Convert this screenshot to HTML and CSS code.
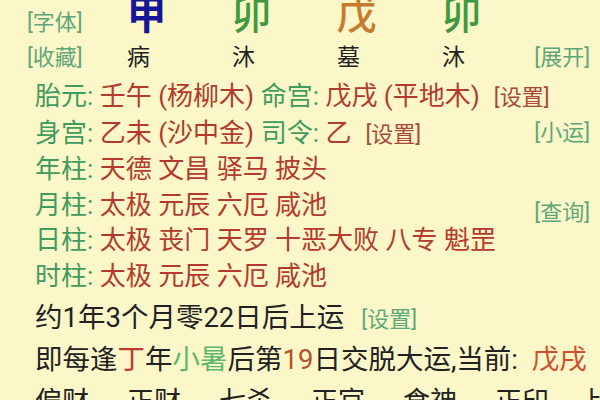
FILE: index.html
```html
<!DOCTYPE html>
<html lang="zh-CN">
<head>
<meta charset="utf-8">
<title>排盘</title>
<link rel="stylesheet" href="styles.css">
</head>
<body>
<div class="page">
  <div class="pillars">
    <span class="link top-link">[字体]</span>
    <span class="big jia">甲</span>
    <span class="big mao">卯</span>
    <span class="big wu">戊</span>
    <span class="big mao">卯</span>
    <span></span>
    <span class="link">[收藏]</span>
    <span class="stage">病</span>
    <span class="stage">沐</span>
    <span class="stage">墓</span>
    <span class="stage">沐</span>
    <span class="link right">[展开]</span>
  </div>
  <div class="info">
    <div class="lines">
      <p class="line"><span class="k">胎元:</span> <span class="v">壬午 (杨柳木)</span> <span class="k">命宫:</span> <span class="v">戊戌 (平地木)</span><span class="set">[设置]</span></p>
      <p class="line"><span class="k">身宫:</span> <span class="v">乙未 (沙中金)</span> <span class="k">司令:</span> <span class="v">乙</span><span class="set">[设置]</span></p>
      <p class="line"><span class="k">年柱:</span> <span class="v">天德 文昌 驿马 披头</span></p>
      <p class="line"><span class="k">月柱:</span> <span class="v">太极 元辰 六厄 咸池</span></p>
      <p class="line"><span class="k">日柱:</span> <span class="v">太极 丧门 天罗 十恶大败 八专 魁罡</span></p>
      <p class="line"><span class="k">时柱:</span> <span class="v">太极 元辰 六厄 咸池</span></p>
    </div>
    <div class="side">
      <span class="link side-xy">[小运]</span>
      <span class="link side-cx">[查询]</span>
    </div>
  </div>
  <p class="line2">约1年3个月零22日后上运<span class="link set2">[设置]</span></p>
  <p class="line2">即每逢<span class="ding">丁</span>年<span class="jq">小暑</span>后第<span class="num">19</span>日交脱大运,当前:&nbsp; <span class="cur">戊戌</span></p>
  <div class="gods">
    <span>偏财</span><span>正财</span><span>七杀</span><span>正官</span><span>食神</span><span>正印</span><span>比肩</span>
  </div>
</div>
</body>
</html>
```

FILE: styles.css
```css
html, body {
  margin: 0;
  padding: 0;
  background: #fbf7c9;
  overflow: hidden;
}

body {
  font-family: Roboto, "Noto Sans CJK SC", sans-serif;
  color: #222;
}

.page {
  width: 600px;
  height: 400px;
  overflow: hidden;
}

.pillars {
  display: grid;
  grid-template-columns: 94px repeat(4, 105px) 1fr;
  grid-template-rows: 40px 36px;
  row-gap: 8px;
  margin-top: -8px;
}

.link {
  font-size: 22px;
  line-height: 26px;
  color: #5ea77a;
  white-space: nowrap;
}

.pillars .link {
  padding-left: 27px;
  line-height: 36px;
}

.pillars .top-link {
  align-self: end;
  line-height: 26px;
  margin-bottom: -4px;
}

.pillars .link.right {
  padding-left: 0;
  padding-right: 10px;
  text-align: right;
}

.big {
  font-family: "Noto Sans CJK SC", sans-serif;
  font-size: 40px;
  line-height: 40px;
  font-weight: 500;
  text-align: center;
}

.jia { color: #16169a; font-weight: 700; }
.mao { color: #3f9a3f; }
.wu { color: #c67c2c; }

.stage {
  font-size: 23px;
  line-height: 36px;
  text-align: center;
  padding-right: 16px;
  color: #222;
}

.info {
  display: flex;
  margin-top: 3px;
}

.lines {
  flex: 1 1 0;
  min-width: 0;
  padding-left: 35px;
}

.line {
  margin: 0;
  font-size: 26px;
  line-height: 35.5px;
  white-space: nowrap;
}

.k { color: #3f9c5e; }
.v { color: #b33a2c; }

.set {
  font-size: 22px;
  color: #a8483a;
  margin-left: 14px;
}

.side {
  flex: none;
  display: flex;
  flex-direction: column;
  align-items: flex-end;
  padding-right: 10px;
}

.side .link {
  line-height: 35.5px;
}

.side-xy { margin-top: 35.5px; }
.side-cx { margin-top: 45px; }

.line2 {
  margin: 0;
  padding-left: 35px;
  font-size: 27.5px;
  line-height: 42px;
  white-space: nowrap;
}

.info + .line2 { margin-top: 3px; }

.set2 { margin-left: 17px; }

.ding { color: #c0392b; }
.jq { color: #5cb86a; }
.num { color: #b5522c; }
.cur { color: #d0502e; }

.gods {
  display: flex;
  gap: 38px;
  padding-left: 35px;
  font-size: 27px;
  line-height: 42px;
  white-space: nowrap;
}
```
